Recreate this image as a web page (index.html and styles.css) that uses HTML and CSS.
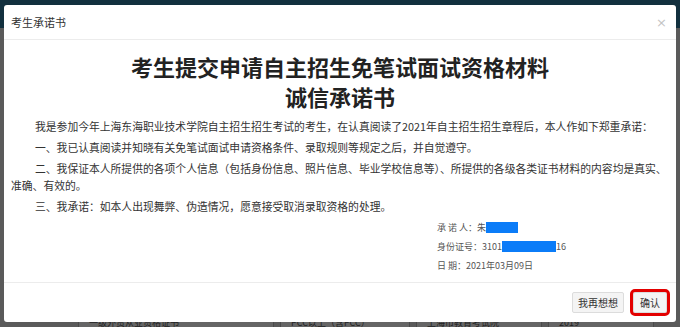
FILE: index.html
```html
<!DOCTYPE html>
<html lang="zh-CN">
<head>
<meta charset="utf-8">
<title>考生承诺书</title>
<link rel="stylesheet" href="styles.css">
</head>
<body>
<div class="page">
  <div class="topbar"></div>
  <div class="under">
    <div class="under-row">
      <span class="sel sel-a">一级外贸从业资格证书</span>
      <span class="sel sel-b">PCC以上（含PCC）</span>
      <span class="sel sel-c">上海市教育考试院</span>
      <span class="sel sel-d">2019</span>
    </div>
  </div>
</div>

<div class="modal">
  <div class="modal-header">
    <span class="modal-title">考生承诺书</span>
    <span class="close">×</span>
  </div>
  <div class="modal-body">
    <h1 class="doc-title">考生提交申请自主招生免笔试面试资格材料<br>诚信承诺书</h1>
    <p class="para">我是参加今年上海东海职业技术学院自主招生招生考试的考生，在认真阅读了2021年自主招生招生章程后，本人作如下郑重承诺：</p>
    <p class="para">一、我已认真阅读并知晓有关免笔试面试申请资格条件、录取规则等规定之后，并自觉遵守。</p>
    <p class="para">二、我保证本人所提供的各项个人信息（包括身份信息、照片信息、毕业学校信息等）、所提供的各级各类证书材料的内容均是真实、准确、有效的。</p>
    <p class="para">三、我承诺：如本人出现舞弊、伪造情况，愿意接受取消录取资格的处理。</p>
    <div class="sign">
      <div class="sign-line">承 诺 人：朱<span class="mask mask-name"></span></div>
      <div class="sign-line">身份证号：3101<span class="mask mask-id"></span>16</div>
      <div class="sign-line">日 期：2021年03月09日</div>
    </div>
  </div>
  <div class="modal-footer">
    <button class="btn">我再想想</button>
    <button class="btn btn-confirm">确认</button>
  </div>
</div>
</body>
</html>
```
FILE: styles.css
```css
html, body {
  margin: 0;
  padding: 0;
}
body {
  width: 680px;
  height: 327px;
  overflow: hidden;
  background: #595959;
  font-family: "Noto Sans CJK SC", "Noto Sans", sans-serif;
  position: relative;
}
.page {
  display: flex;
  flex-direction: column;
  height: 327px;
}
.topbar {
  height: 28px;
  background: #12303e;
}
.under {
  flex: 1;
  background: #5a5a5a;
  display: flex;
  flex-direction: column;
  justify-content: flex-end;
}
.under-row {
  display: flex;
  gap: 6px;
  padding-left: 78px;
  height: 10px;
}
.sel {
  display: block;
  height: 14px;
  background: #656565;
  border: 1px solid #4a4a4a;
  color: #222;
  font-size: 9px;
  line-height: 10px;
  padding-left: 10px;
  box-sizing: border-box;
  overflow: hidden;
  white-space: nowrap;
}
.sel-a { width: 196px; }
.sel-b { width: 130px; }
.sel-c { width: 126px; }
.sel-d { width: 106px; }

.modal {
  position: absolute;
  left: 4px;
  top: 5px;
  width: 672px;
  height: 317px;
  background: #fff;
  border-radius: 3px;
  display: flex;
  flex-direction: column;
}
.modal-header {
  height: 35px;
  box-sizing: border-box;
  padding: 0 9px 0 7px;
  display: flex;
  align-items: center;
  justify-content: space-between;
  border-bottom: 1px solid #ececec;
}
.modal-title {
  font-size: 11px;
  color: #333;
}
.close {
  font-size: 13px;
  color: #c4c4c4;
  font-family: "DejaVu Sans", sans-serif;
}
.modal-body {
  flex: 1;
  padding: 11px 7px 0;
}
.doc-title {
  margin: 0 0 6.5px;
  font-size: 22px;
  line-height: 30px;
  font-weight: bold;
  text-align: center;
  color: #222;
}
.para {
  margin: 0 0 4px;
  font-size: 10.8px;
  line-height: 17px;
  text-indent: 24px;
  color: #333;
}
.sign {
  padding-left: 426px;
  margin-top: -1px;
  font-size: 9px;
  line-height: 19px;
  color: #555;
}
.mask {
  display: inline-block;
  height: 11px;
  background: #0b7cf8;
  vertical-align: -2px;
}
.mask-name { width: 32px; }
.mask-id { width: 54px; }

.modal-footer {
  height: 40px;
  box-sizing: border-box;
  border-top: 1px solid #ececec;
  display: flex;
  justify-content: flex-end;
  align-items: center;
  gap: 9px;
  padding-right: 9px;
}
.btn {
  font-family: "Noto Sans CJK SC", sans-serif;
  font-size: 10px;
  color: #333;
  background: #f4f4f4;
  border: 1px solid #dcdcdc;
  border-radius: 2px;
  height: 21px;
  padding: 0 5px;
  line-height: 19px;
}
.btn-confirm {
  padding: 0 6px;
  outline: 3px solid #e30000;
  outline-offset: 0;
}
```
